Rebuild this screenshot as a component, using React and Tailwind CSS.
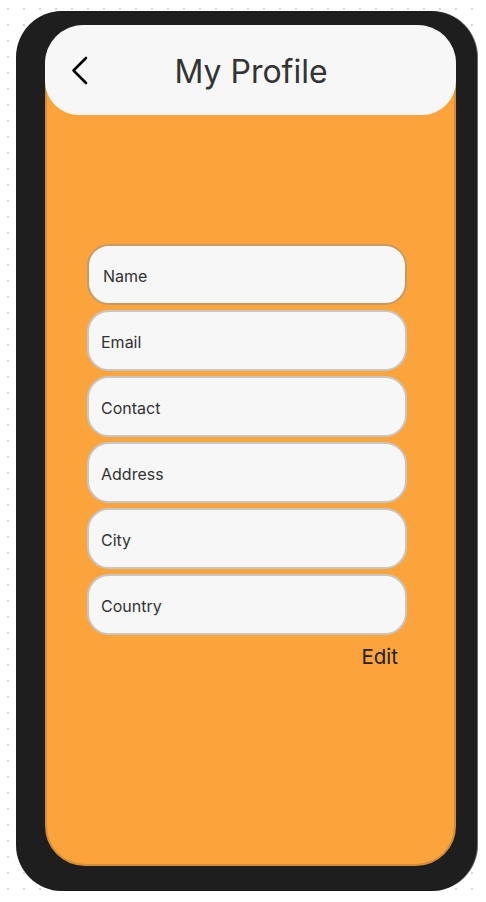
import { useState } from "react";

const fields = ["Name", "Email", "Contact", "Address", "City", "Country"];

export default function App() {
  const [values, setValues] = useState({});

  return (
    <div
      className="w-[486px] h-[902px] bg-white bg-[radial-gradient(#d4d4d4_1px,transparent_1.2px)] bg-[length:16px_16px] bg-[position:0px_1px] pl-4 pt-[11px]"
      style={{ fontFamily: "Inter, 'Noto Sans', sans-serif" }}
    >
      <div className="w-[461px] h-[880px] rounded-[46px] bg-[#1e1e1e] pl-[29px] pr-[21px] pt-[14px] pb-[25px] shadow-[1px_0_0_#6b6b6b]">
        <div className="h-full flex flex-col rounded-[40px] bg-[#fca43c] border-2 border-[#d48d38]">
          <div className="-mx-[2px] -mt-[2px] h-[90px] rounded-t-[38px] rounded-b-[34px] bg-[#f7f7f7] flex items-center relative">
            <button type="button" className="absolute left-[26px] top-[31px] text-black">
              <svg width="20" height="30" viewBox="0 0 20 30" fill="none">
                <path d="M15 2 L2.5 14.5 L15 27" stroke="black" strokeWidth="2.6" strokeLinecap="round" strokeLinejoin="round" />
              </svg>
            </button>
            <h1 className="w-full text-center text-[32px] text-[#333333] pl-[1px] pt-[3px]">My Profile</h1>
          </div>

          <div className="mt-[129px] ml-[40px] w-[320px] flex flex-col gap-[5px]">
            {fields.map((f, i) => (
              <input
                key={f}
                placeholder={f}
                value={values[f] || ""}
                onChange={(e) => setValues({ ...values, [f]: e.target.value })}
                className={
                  "h-[61px] w-full rounded-[22px] bg-[#f7f7f7] border-2 text-[16px] text-[#333333] placeholder:text-[#333333] outline-none pt-[2px] " +
                  (i === 0 ? "border-[#c79a64] pl-[14px]" : "border-[#c6c6c6] pl-[12px]")
                }
              />
            ))}
            <div className="flex justify-end pr-[9px] mt-[3px]">
              <button type="button" className="text-[20.5px] text-[#222222] leading-[28px]">Edit</button>
            </div>
          </div>
        </div>
      </div>
    </div>
  );
}
